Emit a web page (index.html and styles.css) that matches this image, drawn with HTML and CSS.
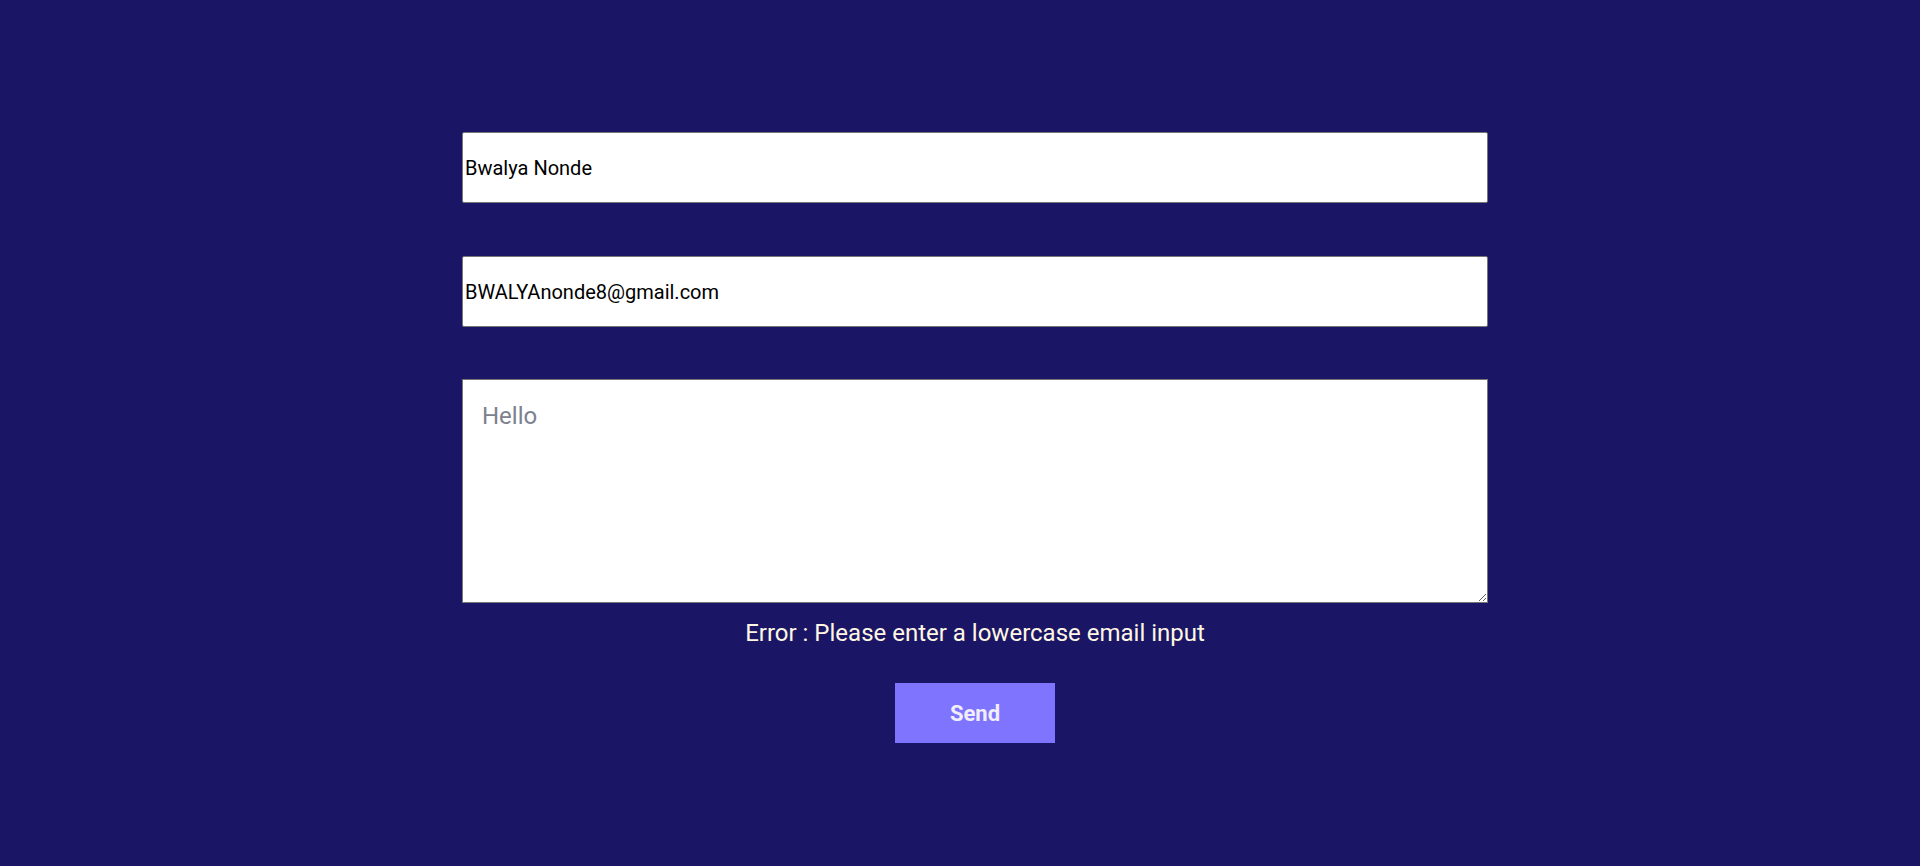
FILE: index.html
```html
<!DOCTYPE html>
<html lang="en">
<head>
<meta charset="utf-8">
<title>Contact</title>
<link rel="stylesheet" href="styles.css">
</head>
<body>
<div class="page">
  <form class="contact-form">
    <input class="field" type="text" value="Bwalya Nonde">
    <input class="field field-email" type="text" value="BWALYAnonde8@gmail.com">
    <textarea class="message" placeholder="Hello"></textarea>
    <p class="error">Error : Please enter a lowercase email input</p>
    <button class="send" type="button">Send</button>
  </form>
</div>
</body>
</html>
```

FILE: styles.css
```css
html, body {
  margin: 0;
  padding: 0;
  background: #1a1665;
  height: 100%;
}

.page {
  box-sizing: border-box;
  padding: 132px 0 0 30px;
  font-family: Roboto, "Liberation Sans", sans-serif;
}

.contact-form {
  width: 1026px;
  margin: 0 auto;
  display: flex;
  flex-direction: column;
  align-items: center;
}

.field {
  box-sizing: border-box;
  display: block;
  width: 100%;
  height: 71px;
  margin: 0;
  padding: 1px 2px;
  border: 1px solid #767676;
  border-radius: 2px;
  background: #fff;
  color: #000;
  font-family: Roboto, "Liberation Sans", sans-serif;
  font-size: 20px;
  outline: none;
}

.field-email {
  margin-top: 53px;
}

.message {
  box-sizing: border-box;
  display: block;
  width: 100%;
  height: 224px;
  margin: 52px 0 0;
  padding: 22px 19px 18px;
  border: 1px solid #767676;
  border-radius: 0;
  background: #fff;
  font-family: Roboto, "Liberation Sans", sans-serif;
  font-size: 24px;
  resize: vertical;
}

.message::placeholder {
  color: #7d818e;
}

.error {
  margin: 16px 0 0;
  color: #fff7e3;
  font-size: 24px;
  line-height: 28px;
}

.send {
  margin-top: 36px;
  width: 160px;
  height: 60px;
  border: none;
  background: #7f74fe;
  color: #f1eefc;
  font-family: Roboto, "Liberation Sans", sans-serif;
  font-size: 22px;
  font-weight: 700;
  cursor: pointer;
}
```
